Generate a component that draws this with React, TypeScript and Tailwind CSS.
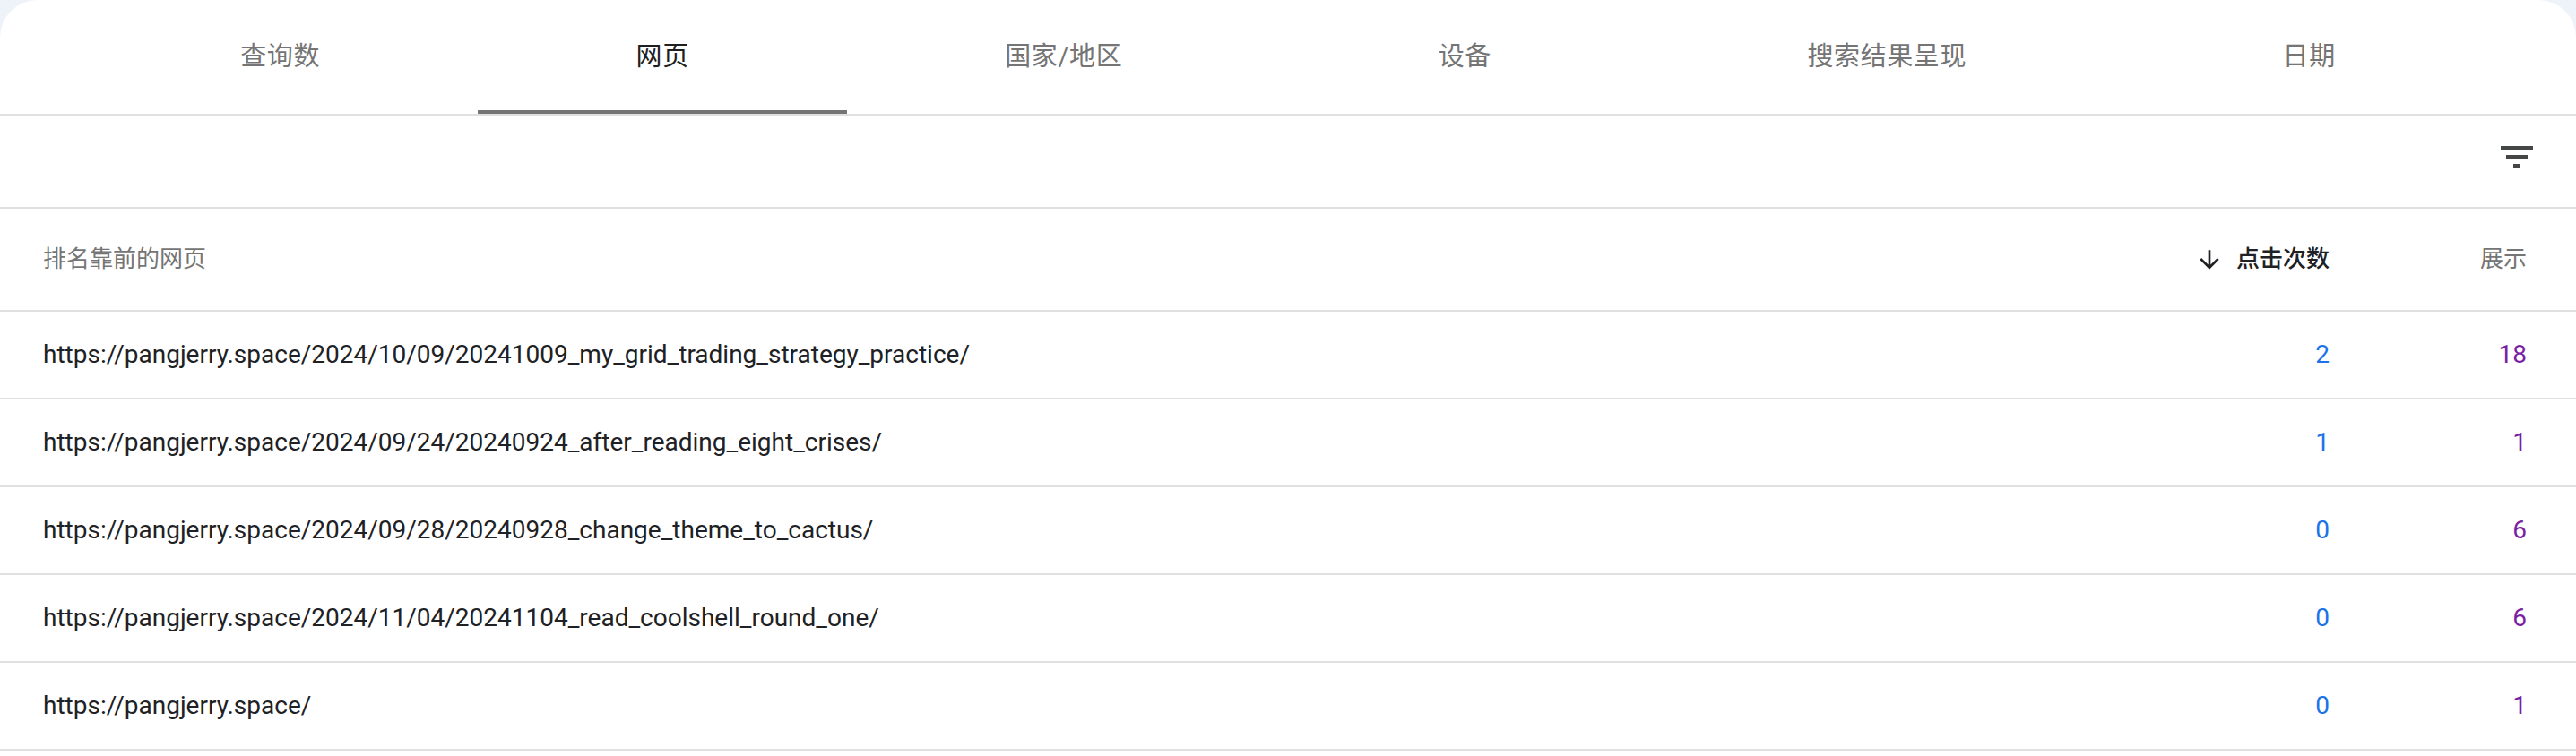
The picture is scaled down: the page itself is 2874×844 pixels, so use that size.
import { ReactNode } from "react";

const tabs = ["查询数", "网页", "国家/地区", "设备", "搜索结果呈现", "日期"];
const activeTab = 1;

const rows = [
  { url: "https://pangjerry.space/2024/10/09/20241009_my_grid_trading_strategy_practice/", clicks: 2, impressions: 18 },
  { url: "https://pangjerry.space/2024/09/24/20240924_after_reading_eight_crises/", clicks: 1, impressions: 1 },
  { url: "https://pangjerry.space/2024/09/28/20240928_change_theme_to_cactus/", clicks: 0, impressions: 6 },
  { url: "https://pangjerry.space/2024/11/04/20241104_read_coolshell_round_one/", clicks: 0, impressions: 6 },
  { url: "https://pangjerry.space/", clicks: 0, impressions: 1 },
];

const font = "font-['Roboto','Noto_Sans_CJK_SC',sans-serif]";

function FilterIcon() {
  return (
    <svg width="48" height="48" viewBox="0 0 24 24" fill="#444746">
      <path d="M10 18h4v-2h-4v2zM3 6v2h18V6H3zm3 7h12v-2H6v2z" />
    </svg>
  );
}

function ArrowDownIcon() {
  return (
    <svg width="32" height="32" viewBox="0 0 24 24" fill="#202124">
      <path d="M20 12l-1.41-1.41L13 16.17V4h-2v12.17l-5.58-5.59L4 12l8 8 8-8z" />
    </svg>
  );
}

function Row({ children, className = "" }: { children: ReactNode; className?: string }) {
  return (
    <div className={`flex items-center border-b-2 border-[#e0e0e0] pl-[48px] pr-[55px] ${className}`}>
      {children}
    </div>
  );
}

export default function App() {
  return (
    <div className={`w-full h-[844px] bg-[#eef2f9] ${font}`}>
      <div className="h-full bg-white rounded-t-[42px] overflow-hidden">
        {/* Tabs */}
        <div className="flex h-[129px] border-b-2 border-[#e0e0e0] px-[92px]">
          {tabs.map((t, i) => (
            <div key={t} className="relative flex-auto flex items-center justify-center">
              <span
                className={`text-[29px] tracking-[0.6px] ${i === activeTab ? "text-[#1f1f1f]" : "text-[#757575]"}`}
              >
                {t}
              </span>
              {i === activeTab && (
                <div className="absolute left-0 right-0 bottom-0 h-[4px] bg-[#757575]" />
              )}
            </div>
          ))}
        </div>

        {/* Toolbar */}
        <div className="flex justify-end h-[104px] border-b-2 border-[#e0e0e0] pt-[22px] pr-[42px]">
          <FilterIcon />
        </div>

        {/* Header */}
        <Row className="h-[115px] text-[26px]">
          <div className="flex-1 text-[#757575]">排名靠前的网页</div>
          <div className="w-[400px] flex items-center justify-end gap-[14px] text-[#202124] font-medium">
            <ArrowDownIcon />
            <span>点击次数</span>
          </div>
          <div className="w-[220px] text-right text-[#757575]">展示</div>
        </Row>

        {/* Data rows */}
        {rows.map((r) => (
          <Row key={r.url} className="h-[98px] text-[28px]">
            <div className="flex-1 text-[#202124] truncate">{r.url}</div>
            <div className="w-[400px] text-right text-[#1a73e8]">{r.clicks}</div>
            <div className="w-[220px] text-right text-[#7b1fa2]">{r.impressions}</div>
          </Row>
        ))}
      </div>
    </div>
  );
}
